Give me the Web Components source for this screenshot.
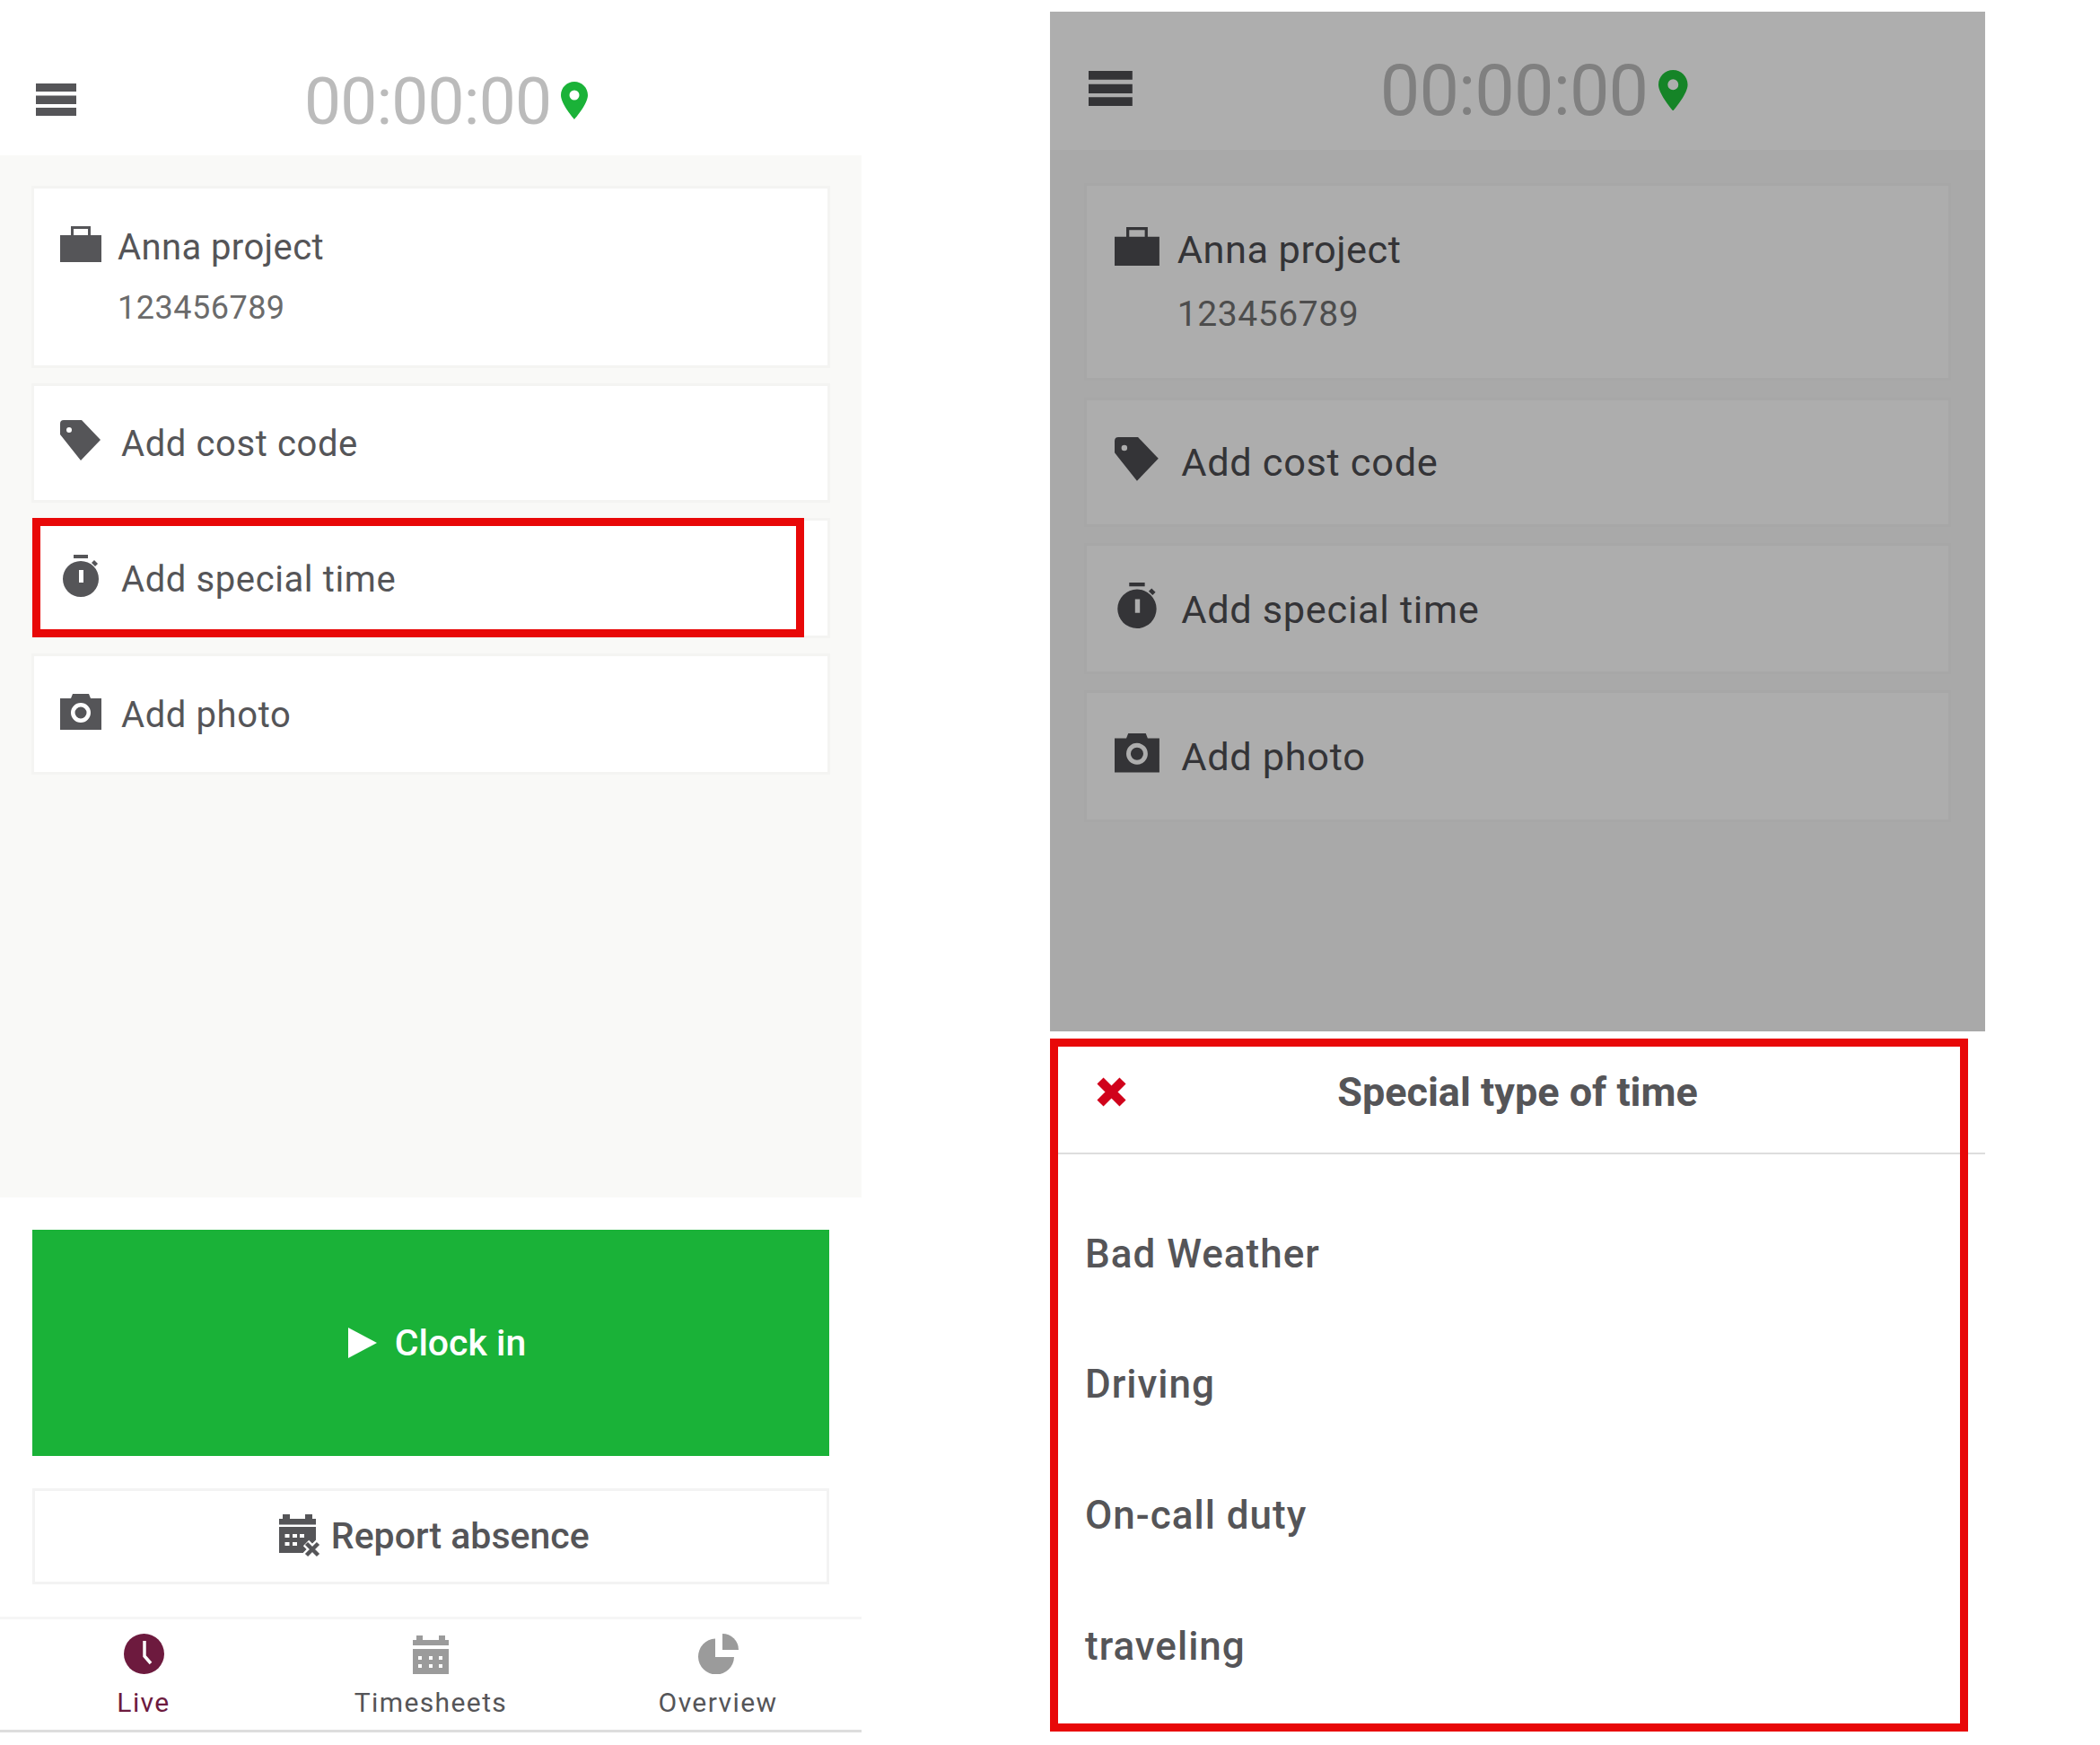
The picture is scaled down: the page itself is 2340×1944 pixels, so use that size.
<!DOCTYPE html>
<html>
<head>
<meta charset="utf-8">
<title>Special time</title>
<style>
  html, body { margin: 0; background: #fff; }
  body { font-family: Roboto, "Liberation Sans", sans-serif; }
  #stage { position: relative; width: 2340px; height: 1944px; overflow: hidden; display: flex; align-items: flex-start; }
</style>
</head>
<body>
<div id="stage">
  <time-screen>
    <clock-header></clock-header>
    <card-list>
      <entry-card icon="briefcase" height="203" sub="123456789">Anna project</entry-card>
      <entry-card icon="tag" height="133">Add cost code</entry-card>
      <entry-card icon="watch" height="134">Add special time</entry-card>
      <entry-card icon="camera" height="135">Add photo</entry-card>
    </card-list>
    <action-area></action-area>
    <tab-bar></tab-bar>
  </time-screen>

  <div style="width:210px;flex:none"></div>

  <special-panel>
    <time-screen dimmed>
      <clock-header></clock-header>
      <card-list>
        <entry-card icon="briefcase" height="203" sub="123456789">Anna project</entry-card>
        <entry-card icon="tag" height="133">Add cost code</entry-card>
        <entry-card icon="watch" height="134">Add special time</entry-card>
        <entry-card icon="camera" height="135">Add photo</entry-card>
      </card-list>
    </time-screen>
    <option-sheet title="Special type of time">
      <sheet-option>Bad Weather</sheet-option>
      <sheet-option>Driving</sheet-option>
      <sheet-option>On-call duty</sheet-option>
      <sheet-option>traveling</sheet-option>
    </option-sheet>
  </special-panel>

  <mark-box style="left:36px;top:577px;width:860px;height:133px"></mark-box>
  <mark-box style="left:1170px;top:1157px;width:1023px;height:772px"></mark-box>
</div>

<script>
const ICONS = {
  menu: [45, 36, '<path d="M0 0h45v9H0zM0 13.500h45v9.500H0zM0 27h45v9H0z"/>'],
  pin: [30, 42, '<path fill-rule="evenodd" d="M15 0C6.700 0 0 6.700 0 15c0 10 15 27 15 27s15-17 15-27C30 6.700 23.300 0 15 0zm0 9.500a5.500 5.500 0 1 1 0 11 5.500 5.500 0 0 1 0-11z"/>'],
  briefcase: [46, 40, '<path fill-rule="evenodd" d="M0 10h12V0h22v10h12v30H0zM15 10h16V3H15z"/>'],
  tag: [45, 45, '<path fill-rule="evenodd" d="M0 4Q0 0 4 0H24L45 22 23 45 0 16zM10 8a3 3 0 1 0 0 6 3 3 0 0 0 0-6z"/>'],
  watch: [46, 47, '<path fill-rule="evenodd" d="M15 0h16v4H15zM23 7a20 20 0 1 1 0 40 20 20 0 0 1 0-40zM21 17v14h5V17z"/><path d="M35 9l3-3 4 4-3 3z"/>'],
  camera: [46, 40, '<path fill-rule="evenodd" d="M0 5h12l2-5h18l2 5h12v35H0zM23 10a11 11 0 1 0 0 22 11 11 0 0 0 0-22zM23 14.500a6.500 6.500 0 1 1 0 13 6.500 6.500 0 0 1 0-13z"/>'],
  play: [32, 34, '<path d="M0 0l32 17L0 34z"/>'],
  absence: [46, 48, '<path fill-rule="evenodd" d="M4 0h8v5h17V0h8v5h4v6.500H0V5h4zM0 14h41v29H0zM6.500 22v4h5v-4zM15 22v4h5v-4zM23 22v4h5v-4zM6.500 31v4h5v-4zM15 31v4h5v-4z"/><path d="M30 32l14 14M44 32L30 46" stroke="#fff" stroke-width="9"/><path d="M30.500 32.500l13 13M43.500 32.500l-13 13" stroke="currentColor" stroke-width="4.500"/>'],
  calendar: [40, 43, '<path fill-rule="evenodd" d="M4 0h7v5h18V0h7v5h4v6H0V5h4zM0 15h40v28H0zM6 23v4h4v-4zM18 23v4h4v-4zM29 23v4h4v-4zM6 32v4h4v-4zM18 32v4h4v-4zM29 32v4h4v-4z"/>'],
  clock: [45, 45, '<circle cx="22.500" cy="22.500" r="22.500"/><path d="M23 8v17l7 8" fill="none" stroke="#fff" stroke-width="3.500"/>'],
  pie: [45, 45, '<path d="M19 5.500A20 20 0 1 0 40 26H19z"/><path d="M27 0a18 18 0 0 1 18 18H27z"/>'],
  close: [35, 35, '<path d="M5 5l25 25M30 5L5 30" fill="none" stroke="currentColor" stroke-width="10"/>']
}

customElements.define('app-icon', class extends HTMLElement {
  connectedCallback() {
    const [w, h, body] = ICONS[this.getAttribute('name')]
    this.attachShadow({ mode: 'open' }).innerHTML = `
      <style>
        :host { display: block; flex: none; width: ${w}px; height: ${h}px; }
        svg { display: block; width: 100%; height: 100%; fill: currentColor; }
      </style>
      <svg viewBox="0 0 ${w} ${h}">${body}</svg>`
  }
})

customElements.define('time-screen', class extends HTMLElement {
  constructor() {
    super()
    this.attachShadow({ mode: 'open' }).innerHTML = `
      <style>
        :host {
          display: flex; flex-direction: column; flex: none; width: 960px; height: 1930px;
          background: var(--paper); color: var(--ink);
          --paper: #fff; --ground: #f9f9f7; --card: #fff; --edge: #f4f4f2;
          --ink: #555558; --muted: #6b6b6b; --faint: #bbb; --pin: #1ab238;
          --header-h: 173px; --header-top: 48px;
        }
        :host([dimmed]) {
          zoom: 1.085; height: 1047px;
          --paper: #aeaeae; --ground: #a9a9a9; --card: #adadad; --edge: #a7a7a7;
          --ink: #343437; --muted: #4d4d4d; --faint: #808080; --pin: #158427;
          --header-h: 142px; --header-top: 16px;
        }
      </style>
      <slot></slot>`
  }
})

customElements.define('clock-header', class extends HTMLElement {
  constructor() {
    super()
    this.attachShadow({ mode: 'open' }).innerHTML = `
      <style>
        :host {
          display: flex; align-items: center; flex: none; box-sizing: border-box;
          height: var(--header-h); padding: var(--header-top) 0 0 40px;
        }
        .time {
          margin: 5px 0 0 254px; font-size: 73px; font-weight: 400; line-height: 1; letter-spacing: -.8px;
          color: var(--faint); white-space: nowrap;
        }
        .pin { margin: 3px 0 0 11px; color: var(--pin); }
      </style>
      <app-icon name="menu"></app-icon>
      <span class="time">00:00:00</span>
      <app-icon class="pin" name="pin"></app-icon>`
  }
})

customElements.define('card-list', class extends HTMLElement {
  constructor() {
    super()
    this.attachShadow({ mode: 'open' }).innerHTML = `
      <style>
        :host {
          display: flex; flex-direction: column; gap: 17px; flex: 1; box-sizing: border-box;
          padding: 34px 35px 0 35px; background: var(--ground);
        }
      </style>
      <slot></slot>`
  }
})

customElements.define('entry-card', class extends HTMLElement {
  connectedCallback() {
    const sub = this.getAttribute('sub')
    const icon = this.getAttribute('icon')
    this.attachShadow({ mode: 'open' }).innerHTML = `
      <style>
        :host {
          display: flex; align-items: ${sub ? 'flex-start' : 'center'}; box-sizing: border-box;
          height: ${this.getAttribute('height')}px; padding: ${sub ? '42px' : '0'} 0 0 29px;
          background: var(--card); border: 3px solid var(--edge); font-size: 40px; color: var(--ink);
        }
        app-icon { margin-top: ${sub ? '0' : '-6px'}; }
        .text { margin-left: ${sub ? 18 : 68 - ICONS[icon][0]}px; margin-top: ${sub ? '0' : '3px'}; letter-spacing: ${sub ? '.4px' : '.6px'}; }
        .title { line-height: 48px; white-space: nowrap; }
        .sub { margin-top: 22px; font-size: 36px; line-height: 42px; color: var(--muted); letter-spacing: .5px; }
      </style>
      <app-icon name="${icon}"></app-icon>
      <div class="text">
        <div class="title"><slot></slot></div>
        ${sub ? `<div class="sub">${sub}</div>` : ''}
      </div>`
  }
})

customElements.define('action-area', class extends HTMLElement {
  constructor() {
    super()
    this.attachShadow({ mode: 'open' }).innerHTML = `
      <style>
        :host {
          display: flex; flex-direction: column; gap: 36px; flex: none; box-sizing: border-box;
          height: 467px; padding: 36px 36px 36px; background: #fff;
        }
        .clock, .absence { display: flex; align-items: center; justify-content: center; box-sizing: border-box; }
        .clock { height: 253px; gap: 20px; padding-left: 14px; background: #1ab238; color: #fff; font-size: 41px; font-weight: 500; }
        .absence { height: 108px; gap: 11.500px; padding-left: 8px; border: 3px solid #f3f3f3; color: #555558; font-size: 41px; font-weight: 500; }
      </style>
      <div class="clock"><app-icon name="play"></app-icon><span>Clock in</span></div>
      <div class="absence"><app-icon name="absence"></app-icon><span>Report absence</span></div>`
  }
})

customElements.define('tab-bar', class extends HTMLElement {
  constructor() {
    super()
    this.attachShadow({ mode: 'open' }).innerHTML = `
      <style>
        :host {
          display: grid; grid-template-columns: repeat(3, 1fr); flex: none; box-sizing: border-box;
          height: 129px; border-top: 3px solid #f6f6f6; border-bottom: 3px solid #ddd; background: #fff;
        }
        .tab { display: flex; flex-direction: column; align-items: center; justify-content: flex-end; padding-bottom: 12px; color: #555558; font-size: 30px; letter-spacing: 1.4px; line-height: 36px; }
        .tab app-icon { margin-bottom: 14px; color: #9b9b9b; }
        .live, .live app-icon { color: #6d1a3e; }
      </style>
      <div class="tab live"><app-icon name="clock"></app-icon>Live</div>
      <div class="tab"><app-icon name="calendar"></app-icon>Timesheets</div>
      <div class="tab"><app-icon name="pie"></app-icon>Overview</div>`
  }
})

customElements.define('special-panel', class extends HTMLElement {
  constructor() {
    super()
    this.attachShadow({ mode: 'open' }).innerHTML = `
      <style>
        :host { display: block; flex: none; width: 1042px; margin-top: 13px; }
      </style>
      <slot></slot>`
  }
})

customElements.define('option-sheet', class extends HTMLElement {
  connectedCallback() {
    this.attachShadow({ mode: 'open' }).innerHTML = `
      <style>
        :host { display: block; background: #fff; color: #555558; }
        header {
          display: grid; grid-template-columns: 1fr auto 1fr; align-items: center;
          height: 135px; border-bottom: 2px solid #ddd;
        }
        app-icon { margin-left: 51px; color: #d0021b; }
        h2 { margin: 0; font-size: 45px; font-weight: 700; white-space: nowrap; }
        .list { padding: 38px 0 0 39px; }
      </style>
      <header>
        <app-icon name="close"></app-icon>
        <h2>${this.getAttribute('title')}</h2>
      </header>
      <div class="list"><slot></slot></div>`
  }
})

customElements.define('sheet-option', class extends HTMLElement {
  constructor() {
    super()
    this.attachShadow({ mode: 'open' }).innerHTML = `
      <style>
        :host { display: flex; align-items: center; height: 145.600px; font-size: 44px; font-weight: 500; letter-spacing: 1px; }
      </style>
      <slot></slot>`
  }
})

customElements.define('mark-box', class extends HTMLElement {
  constructor() {
    super()
    this.attachShadow({ mode: 'open' }).innerHTML = `
      <style>
        :host { position: absolute; box-sizing: border-box; border: 9px solid #e80808; pointer-events: none; }
      </style>`
  }
})
</script>
</body>
</html>
